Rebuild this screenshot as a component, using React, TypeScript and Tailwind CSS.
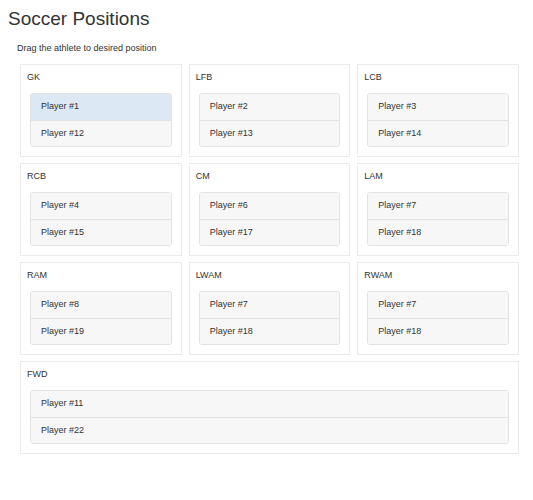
// Soccer positions board: position panels holding draggable player lists

type Position = {
  name: string;
  players: string[];
  wide?: boolean;
};

const POSITIONS: Position[] = [
  { name: "GK", players: ["Player #1", "Player #12"] },
  { name: "LFB", players: ["Player #2", "Player #13"] },
  { name: "LCB", players: ["Player #3", "Player #14"] },
  { name: "RCB", players: ["Player #4", "Player #15"] },
  { name: "CM", players: ["Player #6", "Player #17"] },
  { name: "LAM", players: ["Player #7", "Player #18"] },
  { name: "RAM", players: ["Player #8", "Player #19"] },
  { name: "LWAM", players: ["Player #7", "Player #18"] },
  { name: "RWAM", players: ["Player #7", "Player #18"] },
  { name: "FWD", players: ["Player #11", "Player #22"], wide: true },
];

function PositionPanel({ position, active }: { position: Position; active?: string }) {
  return (
    <div
      className={
        "border border-[#ebebeb] bg-white pb-[9px] " + (position.wide ? "col-span-3" : "")
      }
    >
      <div className="px-[6px] pt-[6px] leading-[13px] text-[9px]">{position.name}</div>
      <div className="mx-[9px] mt-[9px] rounded-[3px] border border-[#e3e3e3] overflow-hidden">
        {position.players.map((p, i) => (
          <div
            key={p}
            className={
              "h-[26px] pl-[10px] flex items-center text-[9px] " +
              (i > 0 ? "border-t border-[#e3e3e3] " : "") +
              (active === p ? "bg-[#dce8f3]" : "bg-[#f7f7f7]")
            }
          >
            {p}
          </div>
        ))}
      </div>
    </div>
  );
}

export default function App() {
  return (
    <div className="w-[533px] h-[500px] bg-white text-[#333] font-['Liberation_Sans',Arial,sans-serif]">
      <h1 className="pl-2 pt-2 text-[19px] leading-[22px]">Soccer Positions</h1>
      <p className="mt-3 pl-[17px] text-[9px] leading-[13px]">Drag the athlete to desired position</p>

      <div className="ml-5 mt-[9px] w-[499px] grid grid-cols-3 gap-x-[7px] gap-y-[6px]">
        {POSITIONS.map((pos, i) => (
          <PositionPanel key={pos.name + i} position={pos} active={i === 0 ? "Player #1" : undefined} />
        ))}
      </div>
    </div>
  );
}
